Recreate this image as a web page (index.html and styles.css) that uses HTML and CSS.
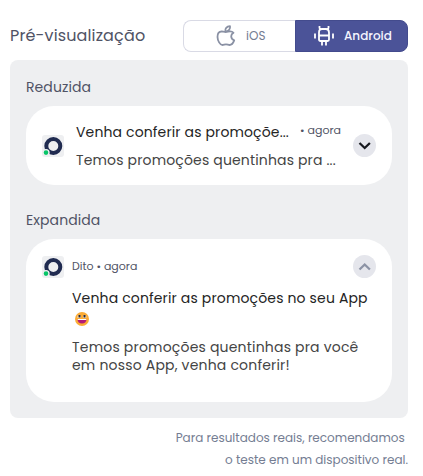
FILE: index.html
```html
<!DOCTYPE html>
<html lang="pt-BR">

<head>
    <meta charset="UTF-8">
    <meta name="viewport" content="width=device-width, initial-scale=1.0">
    <title>Pré-visualização</title>
    <link rel="stylesheet" href="styles.css">
</head>

<body>
    <div class="preview">
        <div class="header">
            <h1><span class="t-title">Pré-visualização</span></h1>
            <div class="tabs">
                <button class="tab" type="button">
                    <svg class="icon-apple" width="20" height="22" viewBox="0 0 20 22">
                        <path d="M9.3 7C8 6.6 7.2 6.3 5.8 6.3C3 6.5 1.4 9 1.5 12C1.6 15.6 4 20 6.5 20C7.8 20 8.4 19.3 10 19.3C11.6 19.3 12.2 20 13.5 20C15.5 20 17.3 17.8 18.2 15.4C16.3 14.5 15.2 13 15.2 11.2C15.2 9.7 16 8.7 17.5 7.8C16.6 6.7 15.5 6.3 14.2 6.3C12.5 6.3 11.2 7 9.3 7Z" />
                        <path d="M9.4 6.6C8.7 3.5 10.7 1.4 14 1.2C14.6 4 12.6 6.5 9.4 6.6Z" />
                    </svg>
                    <span class="t-ios">iOS</span>
                </button>
                <button class="tab active" type="button">
                    <svg class="icon-android" width="20" height="20" viewBox="0 0 20 20">
                        <path d="M5 9.5V6.5Q5 3 8 3H12Q15 3 15 6.5V13.5Q15 15 13.5 15H6.5Q5 15 5 13.5ZM5 9.5H15M5.5 0V2L7 3.5M14.5 0V2L13 3.5M8 15V19.5M12 15V19.5M1 7.5V12.5M19 7.5V12.5" />
                    </svg>
                    <span class="t-android">Android</span>
                </button>
            </div>
        </div>

        <div class="panel">
            <h2><span class="t-reduced">Reduzida</span></h2>
            <div class="card reduced">
                <svg class="logo" width="22" height="22" viewBox="0 0 22 22">
                    <rect width="22" height="22" rx="3" />
                    <circle class="ring" cx="11.3" cy="11" r="7" />
                    <circle class="dot" cx="4" cy="17.6" r="3" />
                </svg>
                <div class="content">
                    <div class="line">
                        <span class="strong t-short">Venha conferir as promoçõe...</span>
                        <span class="time t-now">• agora</span>
                    </div>
                    <p><span class="t-msg">Temos promoções quentinhas pra ...</span></p>
                </div>
                <button class="toggle" type="button">
                    <svg width="23" height="23" viewBox="0 0 23 23">
                        <path d="M6.5 9L11.7 14L16.9 9" />
                    </svg>
                </button>
            </div>

            <h2><span class="t-expanded">Expandida</span></h2>
            <div class="card expanded">
                <div class="top">
                    <svg class="logo" width="22" height="22" viewBox="0 0 22 22">
                        <rect width="22" height="22" rx="3" />
                        <circle class="ring" cx="11.3" cy="11" r="7" />
                        <circle class="dot" cx="4" cy="17.6" r="3" />
                    </svg>
                    <span class="time t-dito">Dito • agora</span>
                    <button class="toggle up" type="button">
                        <svg width="23" height="23" viewBox="0 0 23 23">
                            <path d="M6.5 14.5L11.7 9.5L16.9 14.5" />
                        </svg>
                    </button>
                </div>
                <div class="body">
                    <div class="strong"><span class="t-full">Venha conferir as promoções no seu App</span></div>
                    <svg class="emoji" width="14" height="14" viewBox="0 0 14 14">
                        <circle cx="7" cy="7" r="7" fill="#fbab35" />
                        <path d="M2.5 3.5H5.8V6H2.5ZM8 3.5H11.3V6H8Z" fill="#fff" opacity=".65" />
                        <path d="M3.5 3H5.5V5.5H3.5ZM8.5 3H10.5V5.5H8.5Z" fill="#29283b" />
                        <path d="M2.5 7.2H11.5C11.5 10 9.6 11.5 7 11.5S2.5 10 2.5 7.2Z" fill="#b31b78" />
                        <path d="M2.7 7H11.3V8H2.7Z" fill="#fff" />
                    </svg>
                    <p><span class="t-first">Temos promoções quentinhas pra você</span></p>
                    <p><span class="t-second">em nosso App, venha conferir!</span></p>
                </div>
            </div>
        </div>

        <p class="note"><span class="t-note1">Para resultados reais, recomendamos</span>&nbsp;<br><span class="t-note2">o teste em um dispositivo real.</span></p>
    </div>
</body>

</html>
```
FILE: styles.css
```css
* {
    box-sizing: border-box;
}

body {
    margin: 0;
    background: #ffffff;
    font-family: Poppins, Inter, "Open Sans", sans-serif;
    color: #505365;
}

h1,
h2,
p {
    margin: 0;
    font-weight: 400;
}

button {
    padding: 0;
    border: 0;
    font-family: inherit;
    cursor: pointer;
}

svg {
    display: block;
    flex: none;
}

.preview {
    width: 398px;
    margin: 20px 0 0 10px;
}

.header {
    display: flex;
    justify-content: space-between;
    height: 32px;
    margin-bottom: 8px;
}

h1 {
    font-size: 16px;
    line-height: 31px;
}

.tabs {
    display: flex;
    width: 225px;
}

.tab {
    display: flex;
    align-items: center;
    width: 112px;
    padding-left: 32px;
    border: 1px solid #d9dae5;
    border-right: 0;
    border-radius: 8px 0 0 8px;
    background: #ffffff;
    color: #747d92;
    font-size: 12px;
}

.tab svg {
    margin-right: 10px;
}

.tab.active {
    width: 113px;
    padding-left: 18px;
    border: 1px solid #434b8d;
    border-radius: 0 8px 8px 0;
    background: #4b5398;
    color: #f5f5ff;
    font-weight: 500;
}

.tab path {
    fill: none;
    stroke: #8a91a4;
    stroke-width: 1.8;
    stroke-linejoin: round;
}

.tab.active path {
    stroke: #ffffff;
}

.panel {
    height: 358px;
    padding: 16px;
    border-radius: 8px;
    background: #eeeff1;
}

h2 {
    height: 30px;
    font-size: 14px;
    line-height: 22px;
}

.card {
    border-radius: 28px;
    background: #ffffff;
    color: #444444;
    font-size: 14px;
}

.reduced {
    display: flex;
    align-items: center;
    height: 79px;
    margin-bottom: 24px;
    padding: 0 16px;
}

.content {
    width: 265px;
    margin: 0 12px;
    line-height: 28px;
    white-space: nowrap;
}

.line {
    display: flex;
    justify-content: space-between;
}

.strong {
    color: #242424;
}

.time {
    color: #505365;
    font-size: 11px;
}

.line .time {
    line-height: 25px;
}

.logo rect {
    fill: #eeeff1;
}

.logo .ring {
    fill: none;
    stroke: #202b50;
    stroke-width: 4;
}

.logo .dot {
    fill: #08c568;
    stroke: #eeeff1;
    stroke-width: 1.4;
}

.toggle {
    width: 23px;
    height: 23px;
    border-radius: 50%;
    background: #e5e6ec;
}

.toggle path {
    fill: none;
    stroke: #17191f;
    stroke-width: 2.3;
}

.toggle.up path {
    stroke: #8c93a5;
}

.expanded {
    height: 163px;
    padding: 16px 16px 0;
}

.top {
    display: flex;
    align-items: center;
    height: 23px;
}

.top .time {
    margin-left: 8px;
}

.top .toggle {
    margin-left: auto;
}

.body {
    padding: 9px 0 0 30px;
    line-height: 22px;
    white-space: nowrap;
}

.emoji {
    margin: 3px 0 12px 3px;
}

.body p {
    line-height: 18px;
}

.note {
    margin-top: 9px;
    color: #747d92;
    font-size: 12px;
    line-height: 22px;
    text-align: right;
}

/* letter spacing */
.t-title {
    letter-spacing: 0.14px;
}

.t-reduced,
.t-expanded {
    letter-spacing: 0.08px;
}

.t-short {
    letter-spacing: 0.13px;
}

.t-full {
    letter-spacing: 0.15px;
}

.t-first,
.t-second {
    letter-spacing: 0.19px;
}

.t-msg {
    letter-spacing: 0.15px;
}
```
